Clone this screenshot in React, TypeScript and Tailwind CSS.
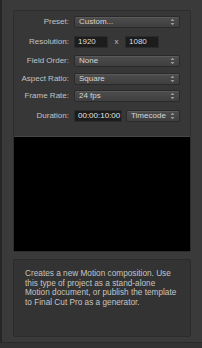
const font = { fontFamily: '"Liberation Sans", Arial, sans-serif' };

function Arrows() {
  return (
    <svg width="5" height="8" viewBox="0 0 5 8" className="shrink-0">
      <path d="M0.5 3 L2.5 0.8 L4.5 3 Z" fill="#9a9a9a" />
      <path d="M0.5 5 L2.5 7.2 L4.5 5 Z" fill="#9a9a9a" />
    </svg>
  );
}

function Select({ value, className = "" }: { value: string; className?: string }) {
  return (
    <div
      className={`flex h-[12px] items-center justify-between rounded-[2px] border border-[#2a2a2a] bg-gradient-to-b from-[#4d4d4d] to-[#3f3f3f] pl-[4px] pr-[4px] text-[8px] leading-none text-[#d6d6d6] shadow-[inset_0_1px_0_rgba(255,255,255,0.08)] ${className}`}
    >
      <span>{value}</span>
      <Arrows />
    </div>
  );
}

function Field({ value, className = "" }: { value: string; className?: string }) {
  return (
    <div
      className={`flex h-[12px] items-center border border-[#2b2b2b] bg-[#1c1c1c] pl-[3px] text-[8px] leading-none text-[#dcdcdc] ${className}`}
    >
      {value}
    </div>
  );
}

function Row({ label, children, className = "" }: { label: string; children: React.ReactNode; className?: string }) {
  return (
    <div className={`flex items-center ${className}`}>
      <div className="w-[55px] shrink-0 text-right text-[8px] leading-none text-[#c2c2c2]">{label}</div>
      <div className="ml-[5px] flex items-center">{children}</div>
    </div>
  );
}

export default function App() {
  return (
    <div style={font} className="relative flex h-[348px] w-[202px] flex-col overflow-hidden bg-[#3a3a3a]">
      <div className="flex flex-1">
        <div className="w-[2px] bg-[#262626]" />
        <div className="flex flex-1 flex-col pl-[11px] pr-[11px] pt-[10px]">
          <div className="flex flex-col rounded-[2px] border border-[#2d2d2d] bg-[#373737] pt-[5px]">
            <Row label="Preset:">
              <Select value="Custom..." className="w-[106px]" />
            </Row>
            <Row label="Resolution:" className="mt-[8px]">
              <Field value="1920" className="w-[34px]" />
              <span className="w-[17px] text-center text-[8px] leading-none text-[#bdbdbd]">x</span>
              <Field value="1080" className="w-[34px]" />
            </Row>
            <Row label="Field Order:" className="mt-[7px]">
              <Select value="None" className="w-[106px]" />
            </Row>
            <Row label="Aspect Ratio:" className="mt-[6px]">
              <Select value="Square" className="w-[106px]" />
            </Row>
            <Row label="Frame Rate:" className="mt-[5px]">
              <Select value="24 fps" className="w-[106px]" />
            </Row>
            <Row label="Duration:" className="mt-[8px]">
              <Field value="00:00:10:00" className="w-[48px] text-[#e6e6e6]" />
              <Select value="Timecode" className="ml-[4px] w-[54px]" />
            </Row>
            <div className="mt-[14px] h-[115px] border-t border-[#474747] bg-black" />
          </div>
          <div className="mt-[7px] h-[78px] rounded-[2px] border border-[#2b2b2b] bg-[#333333] pl-[11px] pr-[4px] pt-[9px] text-[8.25px] leading-[9.5px] whitespace-nowrap text-[#c4c4c4]">
            Creates a new Motion composition. Use
            <br />
            this type of project as a stand-alone
            <br />
            Motion document, or publish the template
            <br />
            to Final Cut Pro as a generator.
          </div>
        </div>
      </div>
      <div className="h-[6px] border-t border-[#2a2a2a] bg-[#333333]" />
    </div>
  );
}
